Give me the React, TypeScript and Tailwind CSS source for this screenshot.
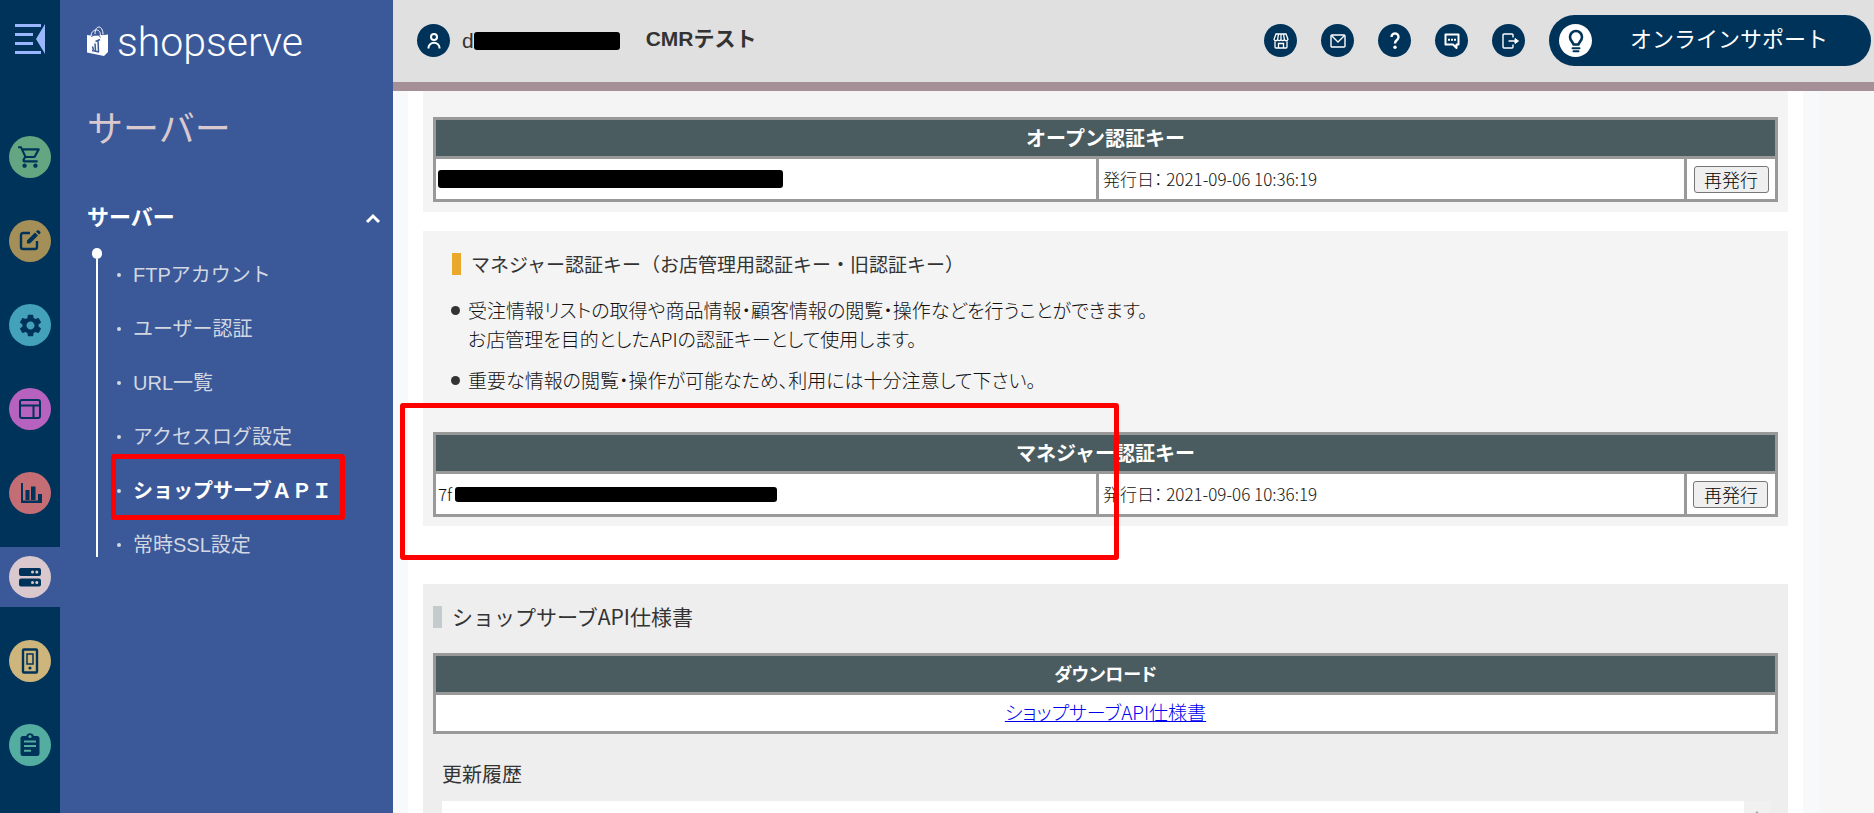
import type { ReactNode } from 'react'
import { MdOutlineShoppingCart, MdSettings } from 'react-icons/md'

const CartIcon = () => <MdOutlineShoppingCart size={26} />

const EditIcon = () => (
  <svg width="24" height="24" viewBox="0 0 24 24" fill="none">
    <path d="M12 4H5a2 2 0 0 0-2 2v12a2 2 0 0 0 2 2h12a2 2 0 0 0 2-2v-6" stroke="currentColor" strokeWidth="2.4" />
    <path d="M9 11.500 17 3.600 20 6.600 12 14.500H9zM18 2.600l1.200-1.200a1.200 1.200 0 0 1 1.700 0l1.300 1.300a1.200 1.200 0 0 1 0 1.700L21 5.600z" fill="currentColor" />
  </svg>
)

const LayoutIcon = () => (
  <svg width="24" height="24" viewBox="0 0 24 24" fill="none" stroke="currentColor" strokeWidth="2">
    <rect x="2" y="3" width="20" height="18" rx="2" />
    <path d="M2 8.500h20M15.500 8.500V21" />
  </svg>
)

const ChartIcon = () => (
  <svg width="24" height="24" viewBox="0 0 24 24" fill="currentColor">
    <path d="M3 2h2v17.500H24V22H3zM7.500 9h4v10h-4zM13 5.500h4.500V19H13zM20 13h4v7h-4z" />
  </svg>
)

const ServerIcon = () => (
  <svg width="24" height="24" viewBox="0 0 24 24">
    <rect x="1" y="3" width="22" height="8" rx="2" fill="currentColor" />
    <rect x="1" y="13.500" width="22" height="8" rx="2" fill="currentColor" />
    <g fill="#d9c8ce">
      <circle cx="14.500" cy="7" r="1.500" />
      <circle cx="18.800" cy="7" r="1.500" />
      <circle cx="14.500" cy="17.500" r="1.500" />
      <circle cx="18.800" cy="17.500" r="1.500" />
    </g>
  </svg>
)

const DeviceIcon = () => (
  <svg width="26" height="26" viewBox="0 0 26 26" fill="none" stroke="currentColor">
    <rect x="6" y="1.500" width="14" height="23" rx="1" strokeWidth="2.400" />
    <rect x="10" y="6" width="6" height="10" strokeWidth="1.500" />
    <circle cx="13" cy="20" r="1.600" fill="currentColor" stroke="none" />
  </svg>
)

const ClipboardIcon = () => (
  <svg width="26" height="26" viewBox="0 0 26 26">
    <path d="M6 4h3.200a4 4 0 0 1 7.600 0H20a2.500 2.500 0 0 1 2.500 2.500v15A2.500 2.500 0 0 1 20 24H6a2.500 2.500 0 0 1-2.500-2.500v-15A2.500 2.500 0 0 1 6 4z" fill="currentColor" />
    <circle cx="13" cy="4.500" r="1.600" fill="#53ada2" />
    <path d="M7 9.500h12M7 14h12M7 18.800h7" stroke="#53ada2" strokeWidth="2" />
  </svg>
)

const UserIcon = () => (
  <svg width="18" height="18" viewBox="0 0 18 18" fill="none" stroke="currentColor" strokeWidth="2">
    <circle cx="9" cy="5" r="3" />
    <path d="M3.500 16.500v-.8a5.500 5 0 0 1 11 0v.8" />
  </svg>
)

const StoreIcon = () => (
  <svg width="18" height="18" viewBox="0 0 18 18" fill="none" stroke="currentColor" strokeWidth="1.300">
    <path d="M4 2h10l2 5.200a1.900 1.900 0 0 1-3.600.4 1.900 1.900 0 0 1-3.400 0 1.900 1.900 0 0 1-3.400 0A1.900 1.900 0 0 1 2 7.200zM6.500 2l-.9 5.600M9 2v5.600M11.500 2l.9 5.600" />
    <path d="M3 9.200V15a1 1 0 0 0 1 1h10a1 1 0 0 0 1-1V9.200M6.500 16v-4.500h5V16" />
  </svg>
)

const MailIcon = () => (
  <svg width="18" height="18" viewBox="0 0 18 18" fill="none" stroke="currentColor" strokeWidth="1.400">
    <rect x="2" y="3" width="14" height="12" rx="1" />
    <path d="M2.500 3.500 9 10l6.500-6.500" />
  </svg>
)

const HelpIcon = () => (
  <svg width="20" height="20" viewBox="0 0 20 20" fill="none">
    <path d="M6.500 6A3.500 3.500 0 1 1 12.600 8.300C11 9.700 10 10 10 12.400" stroke="currentColor" strokeWidth="2.400" />
    <circle cx="10" cy="16.300" r="1.700" fill="currentColor" />
  </svg>
)

const ChatIcon = () => (
  <svg width="20" height="20" viewBox="0 0 20 20" fill="none">
    <path d="M3.500 3.500h13v10h-2v3.500l-3.500-3.500H3.500z" stroke="currentColor" strokeWidth="2" strokeLinejoin="round" />
    <path d="M6 7.700h2v2H6zM9 7.700h2v2H9zM12 7.700h2v2h-2z" fill="currentColor" />
  </svg>
)

const LogoutIcon = () => (
  <svg width="20" height="20" viewBox="0 0 20 20" fill="none" stroke="currentColor" strokeWidth="1.400">
    <path d="M14 6.500V4a1 1 0 0 0-1-1H5a1 1 0 0 0-1 1v12a1 1 0 0 0 1 1h8a1 1 0 0 0 1-1v-2.500M9.500 10H18" />
    <path d="M16 7.500 19.500 10 16 12.500z" fill="currentColor" strokeWidth="1" />
  </svg>
)

const BulbIcon = () => (
  <svg width="24" height="24" viewBox="0 0 24 24" fill="none" stroke="currentColor">
    <path d="M9.500 15.500c0-2-3.500-3.200-3.500-7.500a6 6 0 0 1 12 0c0 4.300-3.500 5.500-3.500 7.500z" strokeWidth="2.600" strokeLinejoin="round" />
    <path d="M8.500 19.300h7M9.500 22.300h5" strokeWidth="2" strokeLinecap="round" />
  </svg>
)

const BagLogo = () => (
  <svg width="22" height="32" viewBox="0 0 22 32" fill="none">
    <path d="M0 9l5 .8 12-.8 4-.5v17.500l-4 4L0 26.500z" fill="#fff" />
    <path d="M4 11C4 5.500 7 4 9.500 4s4 2 4 6M8 8c0-5 2-7 4-7s4 3 4 7.500" stroke="#fff" strokeWidth="1" />
    <path d="M4.500 11c1-3 8-3 9 .5" stroke="#3b5998" strokeWidth="1" />
    <path d="M5 24.500l7 1.500M5.500 20.500l1 3.500M8 17.500l.5 7M11 14l.5 12M8.500 15.500l4.500-2" stroke="#3b5998" strokeWidth="1.500" />
  </svg>
)

const railItems = [
  { label: '受注', color: 'bg-[#63a681]', icon: <CartIcon /> },
  { label: '編集', color: 'bg-[#a58f58]', icon: <EditIcon /> },
  { label: '設定', color: 'bg-[#43a1ba]', icon: <MdSettings size={27} /> },
  { label: 'デザイン', color: 'bg-[#b762bf]', icon: <LayoutIcon /> },
  { label: '集計', color: 'bg-[#c46d74]', icon: <ChartIcon /> },
  { label: 'サーバー', color: 'bg-[#d9c8ce]', icon: <ServerIcon />, active: true },
  { label: 'モバイル', color: 'bg-[#cdb57b]', icon: <DeviceIcon /> },
  { label: '申込', color: 'bg-[#53ada0]', icon: <ClipboardIcon /> },
]

const menuItems = [
  { label: 'FTPアカウント' },
  { label: 'ユーザー認証' },
  { label: 'URL一覧' },
  { label: 'アクセスログ設定' },
  { label: 'ショップサーブＡＰＩ', active: true },
  { label: '常時SSL設定' },
]

const headerIcons = [
  { label: 'ショップ', icon: <StoreIcon /> },
  { label: 'メール', icon: <MailIcon /> },
  { label: 'ヘルプ', icon: <HelpIcon /> },
  { label: 'チャット', icon: <ChatIcon /> },
  { label: 'ログアウト', icon: <LogoutIcon /> },
]

function KeyTable({ title, children }: { title: string; children: ReactNode }) {
  return (
    <table className="w-full table-fixed border-collapse border-3 border-[#999]">
      <colgroup>
        <col />
        <col className="w-[588px]" />
        <col className="w-[91px]" />
      </colgroup>
      <thead>
        <tr>
          <th
            colSpan={3}
            className="h-[39px] border-3 border-[#999] bg-[#4a5c60] p-0 text-xl leading-6 font-bold text-white [font-feature-settings:normal]"
          >
            {title}
          </th>
        </tr>
      </thead>
      <tbody>
        <tr className="h-[43px] bg-white">
          <td className="border-3 border-[#999] px-[2px] py-0">{children}</td>
          <td className="border-3 border-[#999] px-1 py-0 text-[17px] leading-6">発行日： 2021-09-06 10:36:19</td>
          <td className="border-3 border-[#999] p-0 text-center">
            <button type="button" className="h-[27px] w-[75px] rounded-[3px] border border-[#767676] bg-[#efefef] text-lg leading-6 text-black">
              再発行
            </button>
          </td>
        </tr>
      </tbody>
    </table>
  )
}

export default function App() {
  return (
    <div className="flex h-screen overflow-hidden bg-[#f7f7f7] font-['Liberation_Sans','Noto_Sans_CJK_JP',sans-serif] text-[#333]">
      {/* Icon rail */}
      <nav className="flex w-[60px] shrink-0 flex-col bg-[#003359]">
        <button type="button" aria-label="メニューを閉じる" className="mb-[73px] flex justify-center pt-6">
          <svg width="30" height="30" viewBox="0 0 30 30" fill="#99b6ff">
            <path d="M0 0h26v3H0zM0 9h18v3H0zM0 18h18v3H0zM0 27h26v3H0zM30 0v30L21 15z" />
          </svg>
        </button>
        <div className="flex flex-col gap-6">
          {railItems.map((item) => (
            <a
              key={item.label}
              href="#"
              aria-label={item.label}
              className={`flex h-[60px] items-center justify-center ${item.active ? 'bg-[#3b5998]' : ''}`}
            >
              <span className={`flex h-[42px] w-[42px] items-center justify-center rounded-full text-[#003359] ${item.color}`}>
                {item.icon}
              </span>
            </a>
          ))}
        </div>
      </nav>

      {/* Side menu */}
      <aside className="w-[333px] shrink-0 bg-[#3b5998] pt-4 pl-[27px]">
        <div className="flex h-[52px] items-center gap-2">
          <BagLogo />
          <span className="font-['Roboto',sans-serif] text-[41px] leading-[52px] font-light text-white">shopserve</span>
        </div>
        <h1 className="mt-[34px] text-4xl leading-14 text-[#d9c8ce]">サーバー</h1>
        <button type="button" className="mt-11 flex w-full items-center justify-between pr-3 text-white">
          <span className="text-[22px] leading-8 font-bold">サーバー</span>
          <svg width="16" height="12" viewBox="0 0 16 12" fill="none" stroke="currentColor" strokeWidth="3">
            <path d="M2 10l6-6 6 6" />
          </svg>
        </button>
        <div className="mt-[14px] flex">
          <div className="flex w-5 flex-col items-center">
            <span className="h-[11px] w-[10px] shrink-0 rounded-full bg-white" />
            <span className="mb-[15px] w-[2px] grow bg-white" />
          </div>
          <ul className="pl-[6px]">
            {menuItems.map((item) => (
              <li key={item.label} className="relative flex h-[54px] items-center text-xl text-[#d2d7e2]">
                {item.active && (
                  <span className="pointer-events-none absolute -top-[10px] -left-[2px] h-[66px] w-[234px] rounded-[3px] border-5 border-[#f00]" />
                )}
                <span className="mr-3 ml-1 h-1 w-1 rounded-full bg-[#d2d7e2]" />
                <a href="#" className={item.active ? 'font-bold text-white' : ''}>
                  {item.label}
                </a>
              </li>
            ))}
          </ul>
        </div>
      </aside>

      <div className="flex min-w-0 grow flex-col">
        {/* Header */}
        <header className="flex h-[91px] shrink-0 items-center border-b-9 border-[#a69098] bg-[#e0e0e0] pr-[3px] pb-px pl-6">
          <span className="flex h-[33px] w-[33px] items-center justify-center rounded-full bg-[#003359] text-white">
            <UserIcon />
          </span>
          <span className="ml-3 text-[21px]">d</span>
          <span className="h-[18px] w-[146px] rounded-[3px] bg-black" />
          <span className="ml-[26px] pb-[3px] text-[21px] font-bold">CMRテスト</span>
          <div className="ml-auto flex items-center gap-6">
            {headerIcons.map((item) => (
              <a
                key={item.label}
                href="#"
                aria-label={item.label}
                className="flex h-[33px] w-[33px] items-center justify-center rounded-full bg-[#003359] text-white"
              >
                {item.icon}
              </a>
            ))}
            <button type="button" className="flex h-[51px] w-[322px] items-center rounded-full bg-[#003359] pl-[10px] text-white">
              <span className="flex h-[33px] w-[33px] items-center justify-center rounded-full bg-white text-[#003359]">
                <BulbIcon />
              </span>
              <span className="ml-[38px] pb-[2px] text-[22px] leading-8">オンラインサポート</span>
            </button>
          </div>
        </header>

        <div className="mr-[55px] grow overflow-hidden bg-[#f7f9fb] pr-4 pl-[15px]">
          <main className="bg-white px-[15px] font-['Noto_Sans_CJK_JP',sans-serif] font-light text-[#111] [font-feature-settings:'palt']">
            {/* Open key */}
            <section className="bg-[#f4f4f4] px-[10px] pt-[26px] pb-[10px]">
              <KeyTable title="オープン認証キー">
                <span className="block h-[18px] w-[345px] rounded-[3px] bg-black" />
              </KeyTable>
            </section>

            {/* Manager key */}
            <section className="relative mt-[19px] bg-[#f4f4f4] px-[10px] pt-[22px] pb-[9px]">
              <h2 className="ml-[19px] flex h-[22px] items-center border-l-9 border-[#e8a92c] pl-[10px] text-[19px] font-normal text-[#333] [font-feature-settings:normal]">
                マネジャー認証キー（お店管理用認証キー・旧認証キー）
              </h2>
              <ul className="mt-5 ml-[18px] flex flex-col gap-3 text-[19px] leading-[29px]">
                <li className="flex gap-2">
                  <span className="mt-[11px] h-[9px] w-[9px] shrink-0 rounded-full bg-[#333]" />
                  <span>
                    受注情報リストの取得や商品情報・顧客情報の閲覧・操作などを行うことができます。
                    <br />
                    お店管理を目的としたAPIの認証キーとして使用します。
                  </span>
                </li>
                <li className="flex gap-2">
                  <span className="mt-[11px] h-[9px] w-[9px] shrink-0 rounded-full bg-[#333]" />
                  <span>重要な情報の閲覧・操作が可能なため、利用には十分注意して下さい。</span>
                </li>
              </ul>
              <div className="mt-[38px]">
                <KeyTable title="マネジャー認証キー">
                  <span className="flex items-center gap-[3px] text-[17px] leading-6">
                    7f
                    <span className="h-[15px] w-[322px] rounded-[3px] bg-black" />
                  </span>
                </KeyTable>
              </div>
              <span className="pointer-events-none absolute top-[172px] -left-[23px] h-[157px] w-[719px] rounded-[3px] border-5 border-[#f00]" />
            </section>

            {/* API specification */}
            <section className="mt-[58px] bg-[#eee] px-[10px] pt-[22px]">
              <h2 className="flex h-[22px] items-center border-l-9 border-[#c3cbcd] pl-[10px] text-[21px] font-normal text-[#333] [font-feature-settings:normal]">
                ショップサーブAPI仕様書
              </h2>
              <table className="mt-[25px] w-full border-collapse border-3 border-[#999]">
                <thead>
                  <tr>
                    <th className="h-[39px] border-3 border-[#999] bg-[#4a5c60] p-0 pb-[2px] text-lg leading-6 font-bold text-white">ダウンロード</th>
                  </tr>
                </thead>
                <tbody>
                  <tr>
                    <td className="h-[39px] border-3 border-[#999] bg-white p-0 pb-[2px] text-center text-[19px] leading-6">
                      <a href="#" className="text-[#0000ee] underline">ショップサーブAPI仕様書</a>
                    </td>
                  </tr>
                </tbody>
              </table>
              <h3 className="mt-[26px] ml-[9px] text-xl leading-7 font-normal text-[#333]">更新履歴</h3>
              <div className="mt-[13px] mr-2 ml-[9px] flex h-40 bg-white">
                <div className="grow" />
                <div className="flex w-[26px] justify-center bg-[#f1f1f1] pt-[10px]">
                  <svg width="10" height="6" viewBox="0 0 10 6" fill="#a3a3a3">
                    <path d="M0 6l5-6 5 6z" />
                  </svg>
                </div>
              </div>
            </section>
          </main>
        </div>
      </div>
    </div>
  )
}
